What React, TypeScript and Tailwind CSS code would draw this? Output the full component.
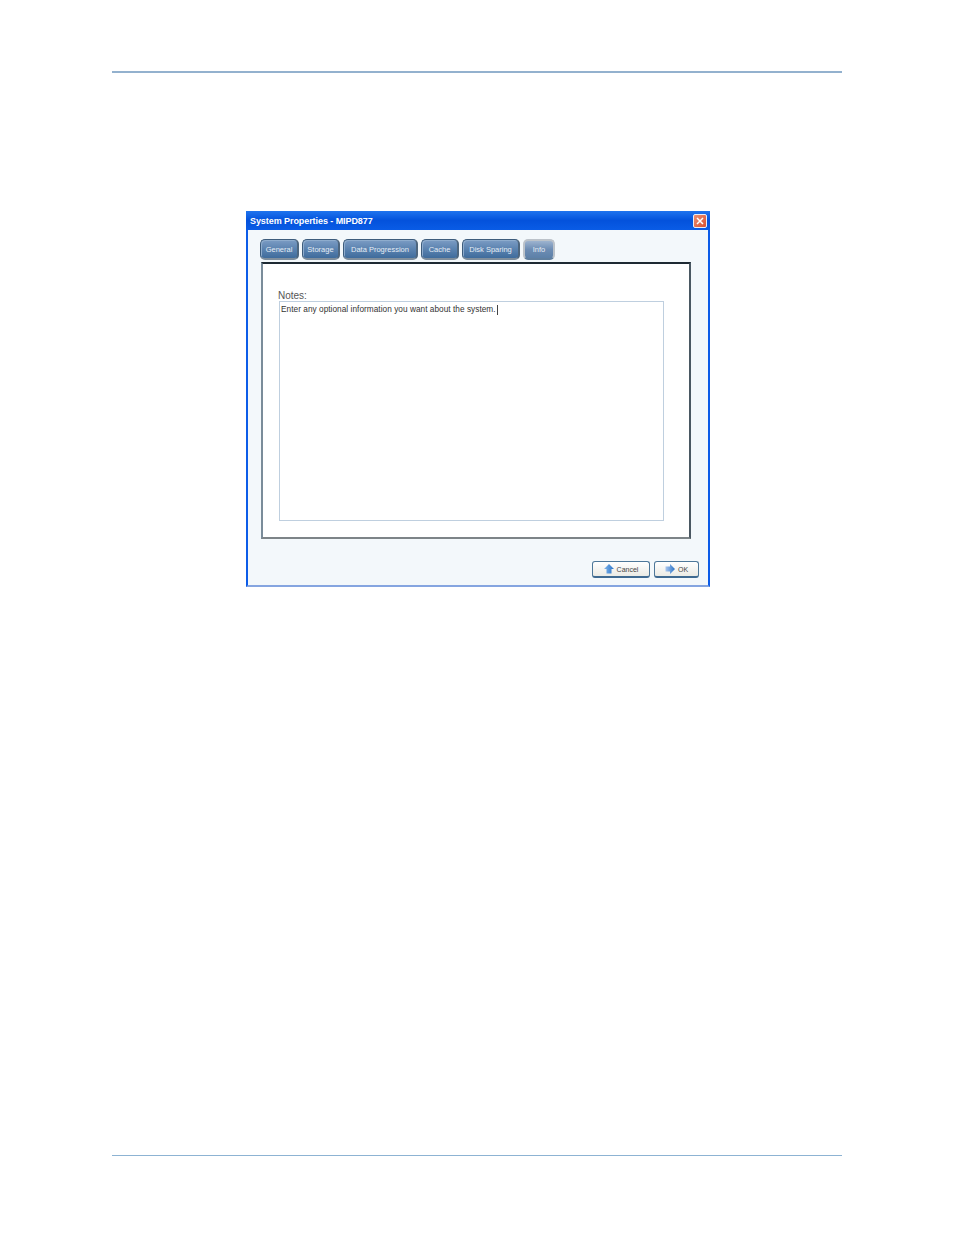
const font = "font-['Liberation_Sans',Arial,sans-serif]";

function Tab(props: { label: string; width: string; active?: boolean }) {
  return (
    <div
      className={`flex items-center justify-center h-[21px] rounded-[5px] text-[7.5px] leading-none text-[#e6edf5] ${props.width} ${
        props.active
          ? "border-2 border-[#bcc3ca] border-b-[#5f7f9f] bg-gradient-to-b from-[#9db3cf] via-[#6d8db4] to-[#5c80a8]"
          : "pt-[1px] border border-b-2 border-r-2 border-[#3d5c7c] border-b-[#7f8e9c] border-r-[#4e667e] shadow-[inset_1px_1px_0_#8eaccd] bg-gradient-to-b from-[#7c9cc4] via-[#5b83b0] to-[#3f6c9c]"
      }`}
    >
      {props.label}
    </div>
  );
}

function UpArrow() {
  return (
    <svg width="10" height="10" viewBox="0 0 10 10">
      <defs>
        <linearGradient id="upFill" x1="0" y1="0" x2="1" y2="0">
          <stop offset="0" stopColor="#7fb4ea" />
          <stop offset="1" stopColor="#2b74c8" />
        </linearGradient>
      </defs>
      <path d="M5 0 L10 5 L7.5 5 L7.5 9.5 L2.5 9.5 L2.5 5 L0 5 Z" fill="url(#upFill)" />
    </svg>
  );
}

function RightArrow() {
  return (
    <svg width="10" height="10" viewBox="0 0 10 10">
      <defs>
        <linearGradient id="rightFill" x1="0" y1="0" x2="1" y2="0">
          <stop offset="0" stopColor="#a9c6ee" />
          <stop offset="1" stopColor="#2b74c8" />
        </linearGradient>
      </defs>
      <path d="M0.5 2.5 L5 2.5 L5 0 L10 5 L5 10 L5 7.5 L0.5 7.5 Z" fill="url(#rightFill)" />
    </svg>
  );
}

function DialogButton(props: { label: string; width: string; gap: string; children: React.ReactNode }) {
  return (
    <div
      className={`flex items-center justify-center h-[17px] rounded-[3px] border border-[#4d7799] border-b-2 border-b-[#3f6a91] bg-gradient-to-b from-white to-[#ebebe5] text-[7px] leading-none text-[#444] ${props.width} ${props.gap}`}
    >
      {props.children}
      <span>{props.label}</span>
    </div>
  );
}

export default function App() {
  return (
    <div className={`flex flex-col w-[954px] h-[1235px] bg-white overflow-hidden ${font}`}>
      <div className="mt-[71px] mx-[112px] h-[2px] bg-[#93b1ce]" />

      <div className="mt-[138px] ml-[246px] flex flex-col w-[464px] h-[376px] bg-[#f3f8fb] border-x-2 border-x-[#0c5ce8] border-b-2 border-b-[#85a5e0]">
        <div className="flex items-center justify-between h-[19px] -mx-[2px] pl-[4px] pr-[3px] bg-gradient-to-b from-[#1f74ee] via-[#0452dc] to-[#0a5ce6]">
          <span className="pt-[2px] text-[9px] leading-none font-bold tracking-[-0.07px] text-white">
            System Properties - MIPD877
          </span>
          <div className="flex items-center justify-center w-[14px] h-[14px] rounded-[2px] border border-[#e8eef8] bg-gradient-to-br from-[#ec8f72] to-[#d8502e]">
            <svg width="8" height="8" viewBox="0 0 8 8">
              <path d="M1 1 L7 7 M7 1 L1 7" stroke="#fff" strokeWidth="1.5" />
            </svg>
          </div>
        </div>

        <div className="flex gap-[3px] mt-[9px] ml-[12px]">
          <Tab label="General" width="w-[39px]" />
          <Tab label="Storage" width="w-[38px]" />
          <Tab label="Data Progression" width="w-[75px]" />
          <Tab label="Cache" width="w-[38px]" />
          <Tab label="Disk Sparing" width="w-[58px]" />
          <Tab label="Info" width="w-[32px]" active />
        </div>

        <div className="flex flex-col mt-[2px] ml-[13px] w-[430px] h-[277px] bg-white border-t-2 border-t-[#1e2a33] border-r-2 border-r-[#4a5862] border-b-2 border-b-[#7d8488] border-l-2 border-l-[#7a8c9a]">
          <span className="mt-[26px] ml-[15px] text-[10px] leading-[11px] text-[#555]">Notes:</span>
          <div className="ml-[16px] w-[385px] h-[220px] border border-[#bfcfdf] pl-[1px] pt-[3px]">
            <div className="flex items-center h-[10px] text-[8.25px] leading-none tracking-[0.04px] text-[#333]">
              <span>Enter any optional information you want about the system.</span>
              <span className="ml-[1px] w-px h-[10px] bg-[#444]" />
            </div>
          </div>
        </div>

        <div className="flex justify-end gap-[4px] mt-[22px] mr-[9px]">
          <DialogButton label="Cancel" width="w-[58px]" gap="gap-[3px]">
            <UpArrow />
          </DialogButton>
          <DialogButton label="OK" width="w-[45px]" gap="gap-[3px]">
            <RightArrow />
          </DialogButton>
        </div>
      </div>

      <div className="mt-[568px] mx-[112px] h-px bg-[#8db3d3]" />
    </div>
  );
}
